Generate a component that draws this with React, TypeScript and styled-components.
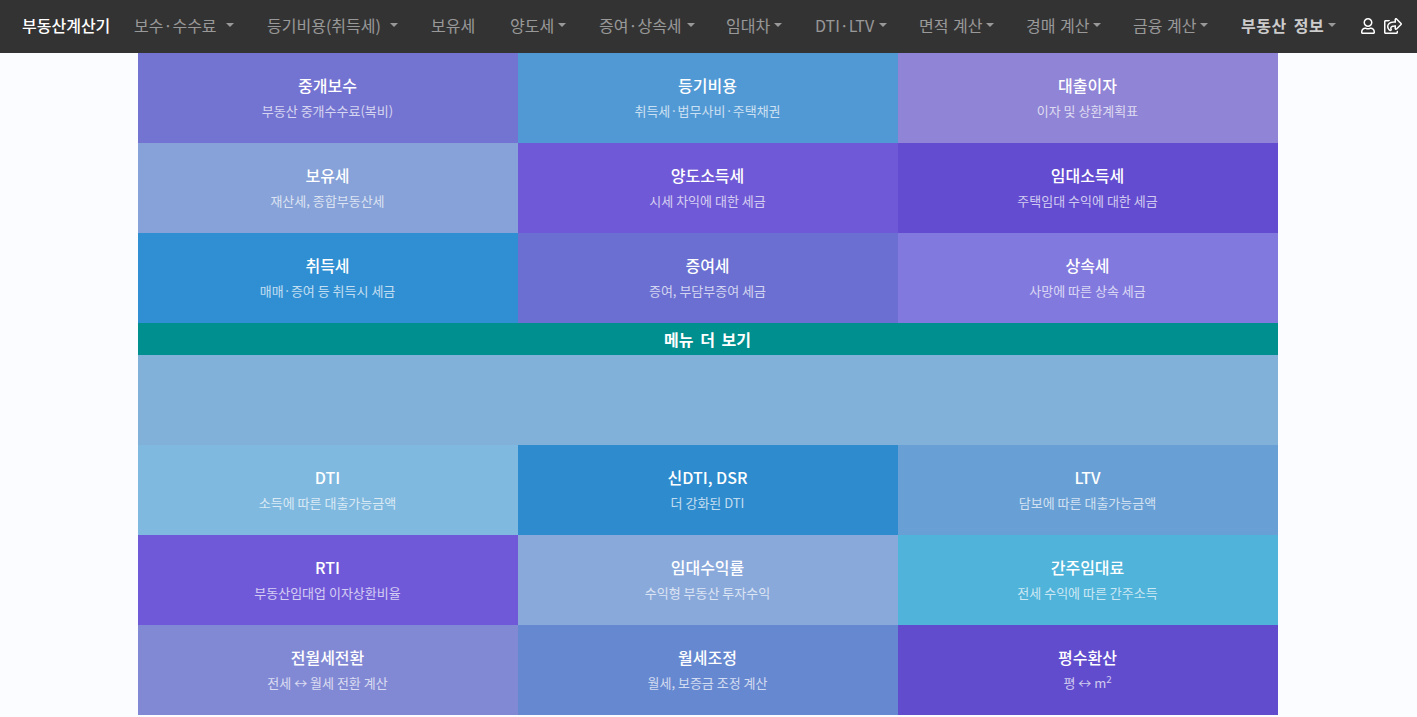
import React from 'react';
import styled, { createGlobalStyle } from 'styled-components';
import { FaRegShareSquare, FaRegUser } from 'react-icons/fa';

const GlobalStyle = createGlobalStyle`
  html, body {
    margin: 0;
    padding: 0;
    background-color: #fbfcff;
    font-family: "Noto Sans CJK KR", "Noto Sans", sans-serif;
  }
`;

const Nav = styled.nav`
  display: flex;
  align-items: center;
  box-sizing: border-box;
  height: 53px;
  padding: 0 0 3px 22px;
  background-color: #333333;
`;

const Brand = styled.a`
  width: 112px;
  flex: none;
  font-size: 16px;
  font-weight: 500;
  color: #ffffff;
`;

const NavItem = styled.a<{ $width: number; $active?: boolean }>`
  display: flex;
  align-items: center;
  flex: none;
  width: ${(p) => p.$width}px;
  font-size: 16px;
  font-weight: ${(p) => (p.$active ? 700 : 400)};
  letter-spacing: ${(p) => (p.$active ? '0.5px' : '0')};
  word-spacing: ${(p) => (p.$active ? '3px' : '1px')};
  color: ${(p) => (p.$active ? 'rgba(255, 255, 255, 0.75)' : 'rgba(255, 255, 255, 0.5)')};
  white-space: nowrap;
`;

const Caret = styled.span<{ $gap: number }>`
  width: 0;
  height: 0;
  margin-left: ${(p) => p.$gap}px;
  border-top: 4.8px solid rgba(255, 255, 255, 0.5);
  border-left: 4.8px solid transparent;
  border-right: 4.8px solid transparent;
`;

const NavIcons = styled.div`
  display: flex;
  align-items: center;
  gap: 8px;
  margin: 2px 0 0 -1px;
  color: #ffffff;
  font-size: 16px;
`;

const Main = styled.main`
  width: 1140px;
  margin-left: 138px;
`;

const Grid = styled.div`
  display: grid;
  grid-template-columns: repeat(3, 380px);
  grid-auto-rows: 90px;
`;

const Tile = styled.a<{ $bg: string }>`
  display: flex;
  flex-direction: column;
  align-items: center;
  padding: 19px 1px 0 0;
  box-sizing: border-box;
  background-color: ${(p) => p.$bg};
  color: #ffffff;
`;

const TileTitle = styled.div`
  height: 27px;
  line-height: 27px;
  font-size: 16px;
  font-weight: 500;
`;

const TileSub = styled.div`
  height: 22px;
  line-height: 22px;
  margin-top: 1px;
  font-size: 13px;
  opacity: 0.7;

  sup {
    font-size: 9.75px;
    line-height: 0;
  }
`;

const MoreBar = styled.div`
  height: 32px;
  line-height: 32px;
  padding-right: 1px;
  background-color: #008f8f;
  color: #ffffff;
  font-size: 16px;
  font-weight: 700;
  word-spacing: 3px;
  text-align: center;
`;

const BlankBand = styled.div`
  height: 90px;
  background-color: #81b0d9;
`;

type Menu = { label: string; width: number; gap?: number; active?: boolean };

const menus: Menu[] = [
  { label: '보수·수수료', width: 133, gap: 9 },
  { label: '등기비용(취득세)', width: 164, gap: 9 },
  { label: '보유세', width: 79 },
  { label: '양도세', width: 89, gap: 4 },
  { label: '증여·상속세', width: 127, gap: 5 },
  { label: '임대차', width: 89, gap: 4 },
  { label: 'DTI·LTV', width: 104, gap: 5 },
  { label: '면적 계산', width: 107, gap: 4 },
  { label: '경매 계산', width: 107, gap: 4 },
  { label: '금융 계산', width: 108, gap: 4 },
  { label: '부동산 정보', width: 120, gap: 4, active: true },
];

type TileData = { title: string; sub: React.ReactNode; bg: string };

const topTiles: TileData[] = [
  { title: '중개보수', sub: '부동산 중개수수료(복비)', bg: '#7373d1' },
  { title: '등기비용', sub: '취득세·법무사비·주택채권', bg: '#5199d4' },
  { title: '대출이자', sub: '이자 및 상환계획표', bg: '#8f84d5' },
  { title: '보유세', sub: '재산세, 종합부동산세', bg: '#86a2d8' },
  { title: '양도소득세', sub: '시세 차익에 대한 세금', bg: '#7059d6' },
  { title: '임대소득세', sub: '주택임대 수익에 대한 세금', bg: '#634cd0' },
  { title: '취득세', sub: '매매·증여 등 취득시 세금', bg: '#2f8fd2' },
  { title: '증여세', sub: '증여, 부담부증여 세금', bg: '#6a6fd1' },
  { title: '상속세', sub: '사망에 따른 상속 세금', bg: '#8279de' },
];

const bottomTiles: TileData[] = [
  { title: 'DTI', sub: '소득에 따른 대출가능금액', bg: '#80b9df' },
  { title: '신DTI, DSR', sub: '더 강화된 DTI', bg: '#2e8bcd' },
  { title: 'LTV', sub: '담보에 따른 대출가능금액', bg: '#689fd5' },
  { title: 'RTI', sub: '부동산임대업 이자상환비율', bg: '#7059d9' },
  { title: '임대수익률', sub: '수익형 부동산 투자수익', bg: '#8aa9db' },
  { title: '간주임대료', sub: '전세 수익에 따른 간주소득', bg: '#4fb3da' },
  { title: '전월세전환', sub: '전세 ↔ 월세 전환 계산', bg: '#8289d4' },
  { title: '월세조정', sub: '월세, 보증금 조정 계산', bg: '#6688d0' },
  {
    title: '평수환산',
    sub: (
      <>
        평 ↔ m<sup>2</sup>
      </>
    ),
    bg: '#604ccd',
  },
];

const TileGrid = ({ tiles }: { tiles: TileData[] }) => (
  <Grid>
    {tiles.map((tile) => (
      <Tile key={tile.title} $bg={tile.bg}>
        <TileTitle>{tile.title}</TileTitle>
        <TileSub>{tile.sub}</TileSub>
      </Tile>
    ))}
  </Grid>
);

const App = () => {
  return (
    <>
      <GlobalStyle />
      <Nav>
        <Brand>부동산계산기</Brand>
        {menus.map((menu) => (
          <NavItem key={menu.label} $width={menu.width} $active={menu.active}>
            {menu.label}
            {menu.gap !== undefined && <Caret $gap={menu.gap} />}
          </NavItem>
        ))}
        <NavIcons>
          <FaRegUser />
          <FaRegShareSquare size={18} />
        </NavIcons>
      </Nav>
      <Main>
        <TileGrid tiles={topTiles} />
        <MoreBar>메뉴 더 보기</MoreBar>
        <BlankBand />
        <TileGrid tiles={bottomTiles} />
      </Main>
    </>
  );
};

export default App;
